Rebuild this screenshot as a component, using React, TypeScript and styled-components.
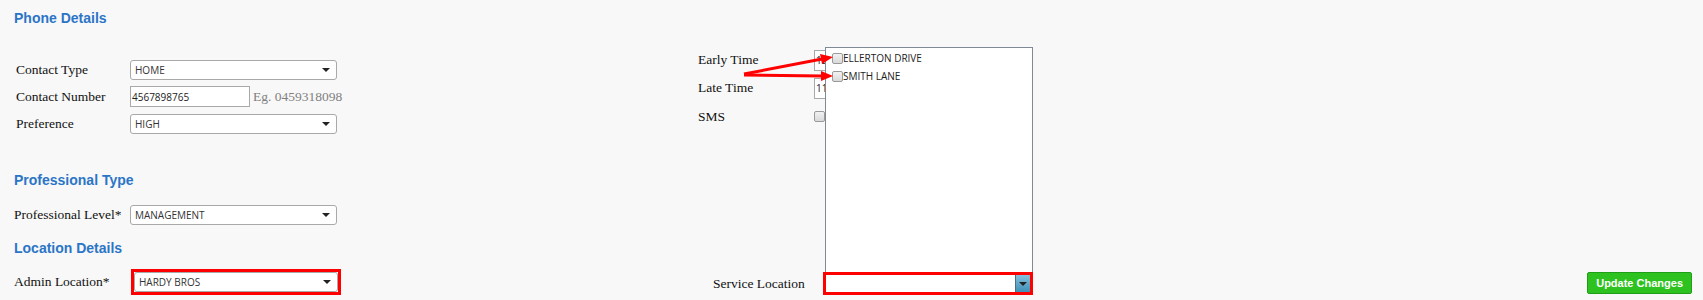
import { createGlobalStyle } from "styled-components";
import styled from "styled-components";

const GlobalStyle = createGlobalStyle`
  body {
    margin: 0;
    background: #f8f8f8;
  }
  * {
    box-sizing: border-box;
  }
`;

const Page = styled.div`
  position: relative;
  display: flex;
  height: 300px;
  overflow: hidden;
  background: #f8f8f8;
`;

const LeftCol = styled.div`
  width: 698px;
  padding: 10px 0 0 14px;
  display: flex;
  flex-direction: column;
`;

const MidCol = styled.div`
  position: relative;
  width: 340px;
  padding: 46px 0 5px 0;
  display: flex;
  flex-direction: column;
  justify-content: space-between;
`;

const RightCol = styled.div`
  flex: 1;
  display: flex;
  justify-content: flex-end;
  align-items: flex-end;
  padding: 0 11px 6px 0;
`;

const Heading = styled.div<{ $top?: number }>`
  margin-top: ${(p) => p.$top || 0}px;
  height: 16px;
  line-height: 16px;
  font-family: "Liberation Sans", Arial, sans-serif;
  font-size: 14px;
  font-weight: bold;
  color: #2b75c7;
`;

const Rows = styled.div<{ $top?: number }>`
  margin-top: ${(p) => p.$top || 0}px;
  display: flex;
  flex-direction: column;
`;

const Row = styled.div<{ $h?: number }>`
  display: flex;
  align-items: center;
  height: ${(p) => p.$h || 27}px;
`;

const Label = styled.div<{ $w?: number; $pad?: number }>`
  width: ${(p) => p.$w || 116}px;
  padding-left: ${(p) => p.$pad || 0}px;
  flex-shrink: 0;
  font-family: "Liberation Serif", "Times New Roman", serif;
  font-size: 13.5px;
  color: #111;
  white-space: nowrap;
`;

const Select = styled.div<{ $w?: number }>`
  width: ${(p) => p.$w || 207}px;
  height: 20px;
  display: flex;
  align-items: center;
  justify-content: space-between;
  padding: 0 6px 0 4px;
  background: #fff;
  border: 1px solid #a9a9a9;
  border-radius: 3px;
  font-family: "Open Sans", "Liberation Sans", sans-serif;
  font-size: 10px;
  color: #333;
`;

const Caret = styled.span`
  width: 0;
  height: 0;
  border-left: 4px solid transparent;
  border-right: 4px solid transparent;
  border-top: 4px solid #222;
`;

const TextInput = styled.div<{ $w?: number }>`
  width: ${(p) => p.$w || 120}px;
  height: 21px;
  display: flex;
  align-items: center;
  padding-left: 1px;
  white-space: nowrap;
  background: #fff;
  border: 1px solid #a9a9a9;
  font-family: "Open Sans", "Liberation Sans", sans-serif;
  font-size: 10px;
  color: #222;
`;

const Hint = styled.span`
  margin-left: 3px;
  font-family: "Liberation Serif", "Times New Roman", serif;
  font-size: 13.5px;
  color: #808080;
`;

const Marked = styled.div`
  border: 3px solid #f00;
  display: flex;
`;

const Check = styled.span`
  width: 11px;
  height: 11px;
  flex-shrink: 0;
  border: 1px solid #9a9a9a;
  border-radius: 2px;
  background: linear-gradient(#f2f2f2, #d9d9d9);
`;

const DropList = styled.div`
  position: absolute;
  left: 127px;
  top: 47px;
  width: 208px;
  height: 226px;
  padding: 1px 0 0 6px;
  background: #fff;
  border: 1px solid #7f8a96;
  z-index: 2;
`;

const ListItem = styled.div`
  display: flex;
  align-items: center;
  height: 18px;
  font-family: "Open Sans", "Liberation Sans", sans-serif;
  font-size: 10px;
  color: #222;
`;

const ServiceRow = styled.div`
  display: flex;
  align-items: center;
  height: 23px;
  padding-left: 15px;
`;

const ServiceSelect = styled.div`
  width: 210px;
  height: 23px;
  display: flex;
  justify-content: flex-end;
  background: #fff;
  border: 3px solid #f00;
  position: relative;
  z-index: 3;
`;

const BlueButton = styled.span`
  width: 15px;
  height: 100%;
  display: flex;
  align-items: center;
  justify-content: center;
  background: linear-gradient(#86c0dc, #3f8fb6);
  border-left: 1px solid #4c6e80;
`;

const UpdateButton = styled.button`
  height: 22px;
  padding: 0 8px;
  background: #2dc21f;
  border: 1px solid #1f9f18;
  border-radius: 2px;
  color: #fff;
  font-family: "Liberation Sans", Arial, sans-serif;
  font-size: 11px;
  font-weight: bold;
  cursor: pointer;
`;

const ArrowLayer = styled.svg`
  position: absolute;
  left: 0;
  top: 0;
  width: 1703px;
  height: 300px;
  pointer-events: none;
  z-index: 5;
`;

export default function App() {
  return (
    <>
      <GlobalStyle />
      <Page>
        <LeftCol>
          <Heading>Phone Details</Heading>
          <Rows $top={30}>
            <Row>
              <Label $pad={2}>Contact Type</Label>
              <Select>
                HOME <Caret />
              </Select>
            </Row>
            <Row>
              <Label $pad={2}>Contact Number</Label>
              <TextInput>4567898765</TextInput>
              <Hint>Eg. 0459318098</Hint>
            </Row>
            <Row>
              <Label $pad={2}>Preference</Label>
              <Select>
                HIGH <Caret />
              </Select>
            </Row>
          </Rows>
          <Heading $top={35}>Professional Type</Heading>
          <Rows $top={13}>
            <Row>
              <Label>Professional Level*</Label>
              <Select>
                MANAGEMENT <Caret />
              </Select>
            </Row>
          </Rows>
          <Heading $top={12}>Location Details</Heading>
          <Rows $top={12}>
            <Row>
              <Label $w={117}>Admin Location*</Label>
              <Marked>
                <Select $w={204}>
                  HARDY BROS <Caret />
                </Select>
              </Marked>
            </Row>
          </Rows>
        </LeftCol>

        <MidCol>
          <Rows>
            <Row $h={28}>
              <Label>Early Time</Label>
              <TextInput $w={30}>12</TextInput>
            </Row>
            <Row $h={28}>
              <Label>Late Time</Label>
              <TextInput $w={30}>11</TextInput>
            </Row>
            <Row $h={29}>
              <Label>SMS</Label>
              <Check />
            </Row>
          </Rows>
          <DropList>
            <ListItem>
              <Check />
              ELLERTON DRIVE
            </ListItem>
            <ListItem>
              <Check />
              SMITH LANE
            </ListItem>
          </DropList>
          <ServiceRow>
            <Label $w={110}>Service Location</Label>
            <ServiceSelect>
              <BlueButton>
                <Caret />
              </BlueButton>
            </ServiceSelect>
          </ServiceRow>
        </MidCol>

        <RightCol>
          <UpdateButton>Update Changes</UpdateButton>
        </RightCol>

        <ArrowLayer viewBox="0 0 1703 300">
          <g stroke="#f00" strokeWidth={3} fill="none">
            <line x1={744} y1={74} x2={822} y2={59} />
            <line x1={744} y1={75} x2={822} y2={76} />
          </g>
          <g fill="#f00">
            <polygon points="833,57 820,54 822,64" />
            <polygon points="833,76 821,71 821,81" />
          </g>
        </ArrowLayer>
      </Page>
    </>
  );
}
